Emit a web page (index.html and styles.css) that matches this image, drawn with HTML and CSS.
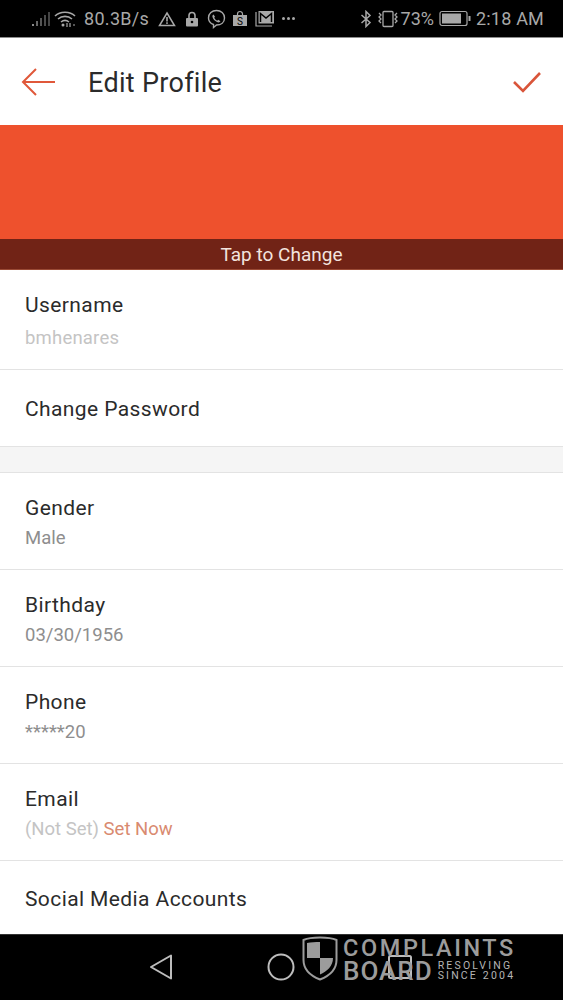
FILE: index.html
```html
<!DOCTYPE html>
<html lang="en">
<head>
    <meta charset="UTF-8">
    <meta name="viewport" content="width=device-width, initial-scale=1.0">
    <title>Edit Profile</title>
    <link rel="stylesheet" href="styles.css">
</head>
<body>
    <div class="phone">
        <div class="status-bar">
            <div class="status-left">
                <svg class="ic-signal" width="20" height="16" viewBox="0 0 20 16"><rect x="1" y="13" width="2" height="2" fill="#8a8a8a"/><rect x="5" y="10" width="2" height="5" fill="#666"/><rect x="9" y="7" width="2" height="8" fill="#555"/><rect x="13" y="4" width="2" height="11" fill="#4a4a4a"/><rect x="17" y="1" width="2" height="14" fill="#444"/></svg>
                <svg class="ic-wifi" width="22" height="18" viewBox="0 0 22 18"><g fill="none" stroke="#a8a8a8" stroke-width="1.6"><path d="M1 6 C6 1 16 1 21 6"/><path d="M4 9 C8 5.500 14 5.500 18 9"/><path d="M7 12 C9.500 10 12.500 10 15 12"/></g><circle cx="9" cy="15" r="1.500" fill="#a8a8a8"/><path d="M13 13 V17 M16 13 L16 17 M19 15 H21" stroke="#a8a8a8" stroke-width="1.200"/></svg>
                <span class="speed">80.3B/s</span>
                <svg class="ic-warn" width="18" height="16" viewBox="0 0 18 16"><path d="M9 2 L16.500 14.500 H1.500 Z" fill="none" stroke="#a8a8a8" stroke-width="1.500"/><rect x="8.200" y="6" width="1.600" height="4.500" fill="#a8a8a8"/><rect x="8.200" y="11.300" width="1.600" height="1.600" fill="#a8a8a8"/></svg>
                <svg class="ic-lock" width="14" height="16" viewBox="0 0 14 16"><path d="M4 7 V4.500 a3 3 0 0 1 6 0 V7" fill="none" stroke="#a8a8a8" stroke-width="1.600"/><rect x="1" y="7" width="12" height="8.500" rx="1" fill="#a8a8a8"/><circle cx="7" cy="11" r="1.300" fill="#000"/></svg>
                <svg class="ic-viber" width="19" height="20" viewBox="0 0 19 20"><path d="M9.500 1.500 C14 1.500 17.500 4.500 17.500 9 C17.500 13.500 14 16 9.500 16 L6.500 18.500 V15.500 C3.500 14.500 1.500 12.500 1.500 9 C1.500 4.500 5 1.500 9.500 1.500 Z" fill="none" stroke="#a8a8a8" stroke-width="1.400"/><path d="M6.500 5.500 L8 7.800 L7.200 8.800 C7.800 10 8.800 11 10.200 11.700 L11.200 10.800 L13.500 12.300 C12.800 13.500 11.500 13.800 10 13 C7.800 12 6 10 5.500 8 C5.200 6.800 5.600 6 6.500 5.500 Z" fill="#a8a8a8"/></svg>
                <svg class="ic-shop" width="16" height="17" viewBox="0 0 16 17"><path d="M5.500 5 V4 a2.500 2.500 0 0 1 5 0 V5" fill="none" stroke="#a8a8a8" stroke-width="1.200"/><path d="M1 5 H15 V16 H1 Z" fill="#a8a8a8"/><text x="8" y="14.500" text-anchor="middle" font-size="10" font-family="Roboto, sans-serif" fill="#000">S</text></svg>
                <svg class="ic-mail" width="20" height="17" viewBox="0 0 20 17"><path d="M1 2 V16 H17" fill="none" stroke="#a8a8a8" stroke-width="1.200"/><rect x="3.500" y="1" width="15.500" height="12.500" fill="#a8a8a8"/><path d="M5.500 12 V3.500 L11 8 L16.500 3.500 V12" fill="none" stroke="#000" stroke-width="1.500"/></svg>
                <span class="dots"><i></i><i></i><i></i></span>
            </div>
            <div class="status-right">
                <svg class="ic-bt" width="12" height="18" viewBox="0 0 12 18"><path d="M1.500 5 L10 12.500 L6 16.500 V1.500 L10 5.500 L1.500 13" fill="none" stroke="#a8a8a8" stroke-width="1.500"/></svg>
                <svg class="ic-vib" width="24" height="18" viewBox="0 0 24 18"><rect x="7" y="1.500" width="10" height="15" rx="1" fill="none" stroke="#a8a8a8" stroke-width="1.300"/><path d="M3 3 L5 5 L3 7 L5 9 L3 11 L5 13 M21 3 L19 5 L21 7 L19 9 L21 11 L19 13" fill="none" stroke="#a8a8a8" stroke-width="1.300"/></svg>
                <span class="pct">73%</span>
                <svg class="ic-batt" width="32" height="17" viewBox="0 0 32 17"><rect x="1" y="1.500" width="27" height="14" rx="2" fill="none" stroke="#a8a8a8" stroke-width="1.200"/><rect x="3" y="3.500" width="19" height="10" fill="#a8a8a8"/><rect x="29.500" y="6" width="2" height="5" fill="#a8a8a8"/></svg>
                <span class="clock">2:18 AM</span>
            </div>
        </div>

        <header class="app-bar">
            <svg class="ic-back" width="36" height="30" viewBox="0 0 36 30"><path d="M34 15 H2 M15 2 L2 15 L15 28" fill="none" stroke="#e0583a" stroke-width="2"/></svg>
            <h1>Edit Profile</h1>
            <svg class="ic-check" width="30" height="22" viewBox="0 0 30 22"><path d="M2 11 L11 20 L28 2" fill="none" stroke="#d9553a" stroke-width="2.600"/></svg>
        </header>

        <div class="banner">
            <div class="banner-label">Tap to Change</div>
        </div>

        <div class="row row-user">
            <div class="row-title">Username</div>
            <div class="row-value faint">bmhenares</div>
        </div>
        <div class="row row-single">
            <div class="row-title">Change Password</div>
        </div>
        <div class="spacer"></div>
        <div class="row row-info">
            <div class="row-title">Gender</div>
            <div class="row-value">Male</div>
        </div>
        <div class="row row-info">
            <div class="row-title">Birthday</div>
            <div class="row-value">03/30/1956</div>
        </div>
        <div class="row row-info">
            <div class="row-title">Phone</div>
            <div class="row-value">*****20</div>
        </div>
        <div class="row row-info">
            <div class="row-title">Email</div>
            <div class="row-value faint">(Not Set) <span class="set-now">Set Now</span></div>
        </div>
        <div class="row row-last">
            <div class="row-title">Social Media Accounts</div>
        </div>

        <div class="nav-bar">
            <svg width="26" height="28" viewBox="0 0 26 28"><path d="M23 2.500 V25.500 L3 14 Z" fill="none" stroke="#bdbdbd" stroke-width="2" stroke-linejoin="round"/></svg>
            <svg width="28" height="28" viewBox="0 0 28 28"><circle cx="14" cy="14" r="12.500" fill="none" stroke="#bdbdbd" stroke-width="2"/></svg>
            <svg class="nav-square" width="24" height="24" viewBox="0 0 24 24"><rect x="1" y="1" width="22" height="22" rx="1.500" fill="none" stroke="#bdbdbd" stroke-width="2"/></svg>
        </div>

        <div class="watermark">
            <svg width="36" height="45" viewBox="0 0 36 45"><path d="M18 1.500 C24 1.500 30 2 34.500 4 V24 C34.500 34 27 40 18 43.500 C9 40 1.500 34 1.500 24 V4 C6 2 12 1.500 18 1.500 Z" fill="none" stroke="#9c9c9c" stroke-width="2"/><path d="M18 6 V22 H5 V7 C9 6 13.500 6 18 6 Z M18 22 H31 C31 30 25 35.500 18 38.500 Z" fill="#9c9c9c"/></svg>
            <div class="wm-text">
                <div class="wm-top">COMPLAINTS</div>
                <div class="wm-bottom">
                    <span class="wm-board">BOARD</span>
                    <span class="wm-tag">RESOLVING<br>SINCE 2004</span>
                </div>
            </div>
        </div>
    </div>
</body>
</html>
```

FILE: styles.css
```css
html, body {
    margin: 0;
    padding: 0;
    background: #fff;
}
.phone {
    position: relative;
    width: 563px;
    height: 1000px;
    overflow: hidden;
    display: flex;
    flex-direction: column;
    font-family: Roboto, "Liberation Sans", sans-serif;
    color: #2b2b2b;
}
.status-bar {
    height: 37px;
    background: #000;
    color: #a8a8a8;
    font-size: 18px;
    display: flex;
    align-items: center;
    justify-content: space-between;
    padding: 0 19px 0 31px;
    border-bottom: 1px solid #8c8c8c;
}
.status-left, .status-right {
    display: flex;
    align-items: center;
}
.ic-wifi { margin-left: 3px; }
.speed { margin-left: 8px; letter-spacing: 0.3px; }
.ic-warn { margin-left: 9px; }
.ic-lock { margin-left: 9px; }
.ic-viber { margin-left: 8px; }
.ic-shop { margin-left: 6px; }
.ic-mail { margin-left: 7px; }
.dots {
    display: flex;
    gap: 2px;
    margin-left: 7px;
}
.dots i {
    width: 3px;
    height: 3px;
    background: #a8a8a8;
    border-radius: 50%;
}
.ic-vib { margin-left: 4px; }
.pct { margin-left: 1px; }
.ic-batt { margin-left: 5px; }
.clock { margin-left: 5px; letter-spacing: 0.2px; }
.app-bar {
    height: 87px;
    display: flex;
    align-items: center;
    padding: 0 21px;
    background: #fff;
}
.app-bar h1 {
    margin: 0 0 0 31px;
    padding-top: 2px;
    font-size: 27px;
    font-weight: 400;
    flex: 1;
    letter-spacing: 0.3px;
}
.banner {
    height: 145px;
    background: #ee512d;
    display: flex;
    flex-direction: column;
    justify-content: flex-end;
}
.banner-label {
    height: 30px;
    line-height: 32px;
    background: #712316;
    color: #f3e4df;
    text-align: center;
    font-size: 19px;
    border-bottom: 1px solid #9a4a35;
}
.row {
    box-sizing: border-box;
    padding-left: 25px;
    border-bottom: 1px solid #e3e3e3;
    background: #fff;
}
.row-title {
    font-size: 21px;
    line-height: 26px;
    letter-spacing: 0.4px;
}
.row-value {
    font-size: 18.5px;
    line-height: 24px;
    color: #8e8e8e;
    margin-top: 8px;
}
.row-value.faint { color: #c4c4c4; }
.row-user .row-value { letter-spacing: 0.2px; }
.set-now { color: #d98a70; }
.row-user {
    height: 100px;
    padding-top: 22px;
}
.row-single {
    height: 77px;
    padding-top: 26px;
}
.spacer {
    height: 25px;
    background: #f5f5f5;
    border-bottom: 1px solid #e3e3e3;
}
.row-info {
    height: 97px;
    padding-top: 22px;
}
.row-info .row-value { margin-top: 5px; }
.row-last {
    flex: 1;
    padding-top: 25px;
    border-bottom: none;
}
.nav-bar {
    height: 66px;
    background: #000;
    border-top: 1px solid #333;
    box-sizing: border-box;
    display: flex;
    align-items: flex-start;
    padding: 18px 0 0 148px;
    gap: 93px;
}
.nav-square { margin-top: 2px; }
.watermark {
    position: absolute;
    left: 302px;
    top: 936px;
    display: flex;
    gap: 5px;
    color: #9c9c9c;
}
.wm-top {
    font-size: 23.5px;
    line-height: 20px;
    font-weight: 500;
    letter-spacing: 2.6px;
    margin-top: 2px;
}
.wm-bottom {
    display: flex;
    align-items: center;
    gap: 5px;
    margin-top: 2px;
}
.wm-board {
    font-size: 26px;
    line-height: 22px;
    font-weight: 500;
    letter-spacing: 1px;
}
.wm-tag {
    font-size: 10.5px;
    line-height: 10px;
    letter-spacing: 2.2px;
    color: #b5b5b5;
}
```
